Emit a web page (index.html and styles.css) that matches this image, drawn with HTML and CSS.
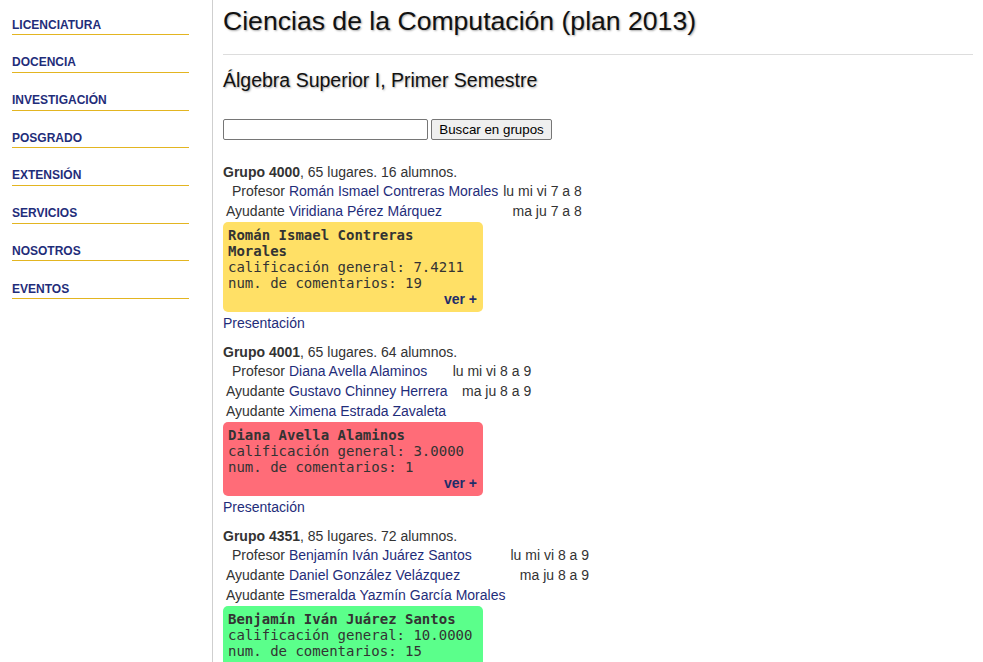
FILE: index.html
```html
<!DOCTYPE html>
<html lang="es">
<head>
<meta charset="utf-8">
<title>Ciencias de la Computación (plan 2013)</title>
<link rel="stylesheet" href="styles.css">
</head>
<body>
<div class="page">
  <aside class="sidebar">
    <nav class="nav">
      <a href="#">LICENCIATURA</a>
      <a href="#">DOCENCIA</a>
      <a href="#">INVESTIGACIÓN</a>
      <a href="#">POSGRADO</a>
      <a href="#">EXTENSIÓN</a>
      <a href="#">SERVICIOS</a>
      <a href="#">NOSOTROS</a>
      <a href="#">EVENTOS</a>
    </nav>
  </aside>
  <main class="main">
    <h1 class="title">Ciencias de la Computación (plan 2013)</h1>
    <hr class="rule">
    <h2 class="subtitle">Álgebra Superior I, Primer Semestre</h2>
    <form class="search">
      <input class="search-input" type="text">
      <button class="search-btn" type="button">Buscar en grupos</button>
    </form>

    <div class="group">
      <div class="group-head"><strong>Grupo 4000</strong>, 65 lugares. 16 alumnos.</div>
      <table class="staff">
        <tr><td class="role">Profesor</td><td><a href="#">Román Ismael Contreras Morales</a></td><td class="sched">lu mi vi 7 a 8</td></tr>
        <tr><td class="role">Ayudante</td><td><a href="#">Viridiana Pérez Márquez</a></td><td class="sched">ma ju 7 a 8</td></tr>
      </table>
      <div class="card card-yellow">
        <div class="card-name">Román Ismael Contreras Morales</div>
        <div>calificación general: 7.4211</div>
        <div>num. de comentarios: 19</div>
        <div class="card-more"><a href="#">ver +</a></div>
      </div>
      <a class="pres" href="#">Presentación</a>
    </div>

    <div class="group">
      <div class="group-head"><strong>Grupo 4001</strong>, 65 lugares. 64 alumnos.</div>
      <table class="staff">
        <tr><td class="role">Profesor</td><td><a href="#">Diana Avella Alaminos</a></td><td class="sched">lu mi vi 8 a 9</td></tr>
        <tr><td class="role">Ayudante</td><td><a href="#">Gustavo Chinney Herrera</a></td><td class="sched">ma ju 8 a 9</td></tr>
        <tr><td class="role">Ayudante</td><td><a href="#">Ximena Estrada Zavaleta</a></td><td class="sched"></td></tr>
      </table>
      <div class="card card-red">
        <div class="card-name">Diana Avella Alaminos</div>
        <div>calificación general: 3.0000</div>
        <div>num. de comentarios: 1</div>
        <div class="card-more"><a href="#">ver +</a></div>
      </div>
      <a class="pres" href="#">Presentación</a>
    </div>

    <div class="group">
      <div class="group-head"><strong>Grupo 4351</strong>, 85 lugares. 72 alumnos.</div>
      <table class="staff">
        <tr><td class="role">Profesor</td><td><a href="#">Benjamín Iván Juárez Santos</a></td><td class="sched">lu mi vi 8 a 9</td></tr>
        <tr><td class="role">Ayudante</td><td><a href="#">Daniel González Velázquez</a></td><td class="sched">ma ju 8 a 9</td></tr>
        <tr><td class="role">Ayudante</td><td><a href="#">Esmeralda Yazmín García Morales</a></td><td class="sched"></td></tr>
      </table>
      <div class="card card-green">
        <div class="card-name">Benjamín Iván Juárez Santos</div>
        <div>calificación general: 10.0000</div>
        <div>num. de comentarios: 15</div>
        <div class="card-more"><a href="#">ver +</a></div>
      </div>
      <a class="pres" href="#">Presentación</a>
    </div>
  </main>
</div>
</body>
</html>
```

FILE: styles.css
```css
html, body {
  margin: 0;
  padding: 0;
  background: #fff;
}
body {
  font-family: "Liberation Sans", Arial, sans-serif;
  font-size: 14px;
  color: #333;
}
a {
  color: #1f2d7a;
  text-decoration: none;
}
.page {
  display: flex;
  align-items: stretch;
  min-height: 662px;
}
.sidebar {
  width: 212px;
  flex: 0 0 212px;
  border-right: 1px solid #cfcfcf;
  box-sizing: content-box;
}
.nav {
  display: flex;
  flex-direction: column;
  padding-left: 12px;
  width: 177px;
  margin-top: -2.5px;
}
.nav a {
  display: block;
  font-size: 12px;
  font-weight: bold;
  line-height: 15px;
  padding: 20.2px 0 1.5px;
  border-bottom: 1px solid #e3b521;
  color: #1f2d7a;
}
.main {
  flex: 1;
  padding: 0 10px;
  min-width: 0;
}
.title {
  font-size: 26.6px;
  font-weight: normal;
  color: #111;
  margin: 6.5px 0 0;
  line-height: 29px;
  text-shadow: 1px 1px 2px #aaa;
}
.rule {
  border: 0;
  border-top: 1px solid #ddd;
  margin: 18.5px 0 0;
  height: 0;
}
.subtitle {
  font-size: 19.5px;
  font-weight: normal;
  color: #111;
  margin: 14px 0 0;
  line-height: 23px;
  text-shadow: 1px 1px 2px #aaa;
}
.search {
  display: flex;
  gap: 3px;
  margin: 27px 0 0;
}
.search-input {
  width: 205px;
  height: 21px;
  box-sizing: border-box;
  border: 1px solid #767676;
  border-radius: 2px;
  margin: 0;
  padding: 1px 2px;
}
.search-btn {
  width: 121px;
  height: 21px;
  box-sizing: border-box;
  font-family: "Liberation Sans", Arial, sans-serif;
  font-size: 13.33px;
  color: #000;
  background: #efefef;
  border: 1px solid #767676;
  border-radius: 2px;
  margin: 0;
  padding: 1px 6px;
}
.group {
  margin-top: 23px;
}
.group + .group {
  margin-top: 12px;
}
.group-head {
  line-height: 16px;
  padding-top: 1px;
}
.group-head strong {
  color: #333;
}
.staff {
  border-spacing: 2px;
  margin-left: 0;
  margin-top: 0;
}
.staff td {
  padding: 1px;
  line-height: 16px;
  white-space: nowrap;
}
.staff .role {
  text-align: right;
}
.staff .sched {
  text-align: right;
  padding-left: 2px;
}
.card {
  width: 250px;
  padding: 5px;
  border-radius: 5px;
  font-family: "DejaVu Sans Mono", monospace;
  font-size: 14px;
  line-height: 16px;
  color: #333;
  margin: 0 0 3px;
}
.card-name {
  font-weight: bold;
}
.card-more {
  text-align: right;
  font-family: "Liberation Sans", Arial, sans-serif;
  font-weight: bold;
  padding-right: 1px;
}
.card-more a {
  color: #1f2d6a;
}
.card-yellow { background: #ffe066; }
.card-red { background: #ff6c78; }
.card-green { background: #5bff8b; }
.pres {
  display: block;
  line-height: 16px;
}
```
